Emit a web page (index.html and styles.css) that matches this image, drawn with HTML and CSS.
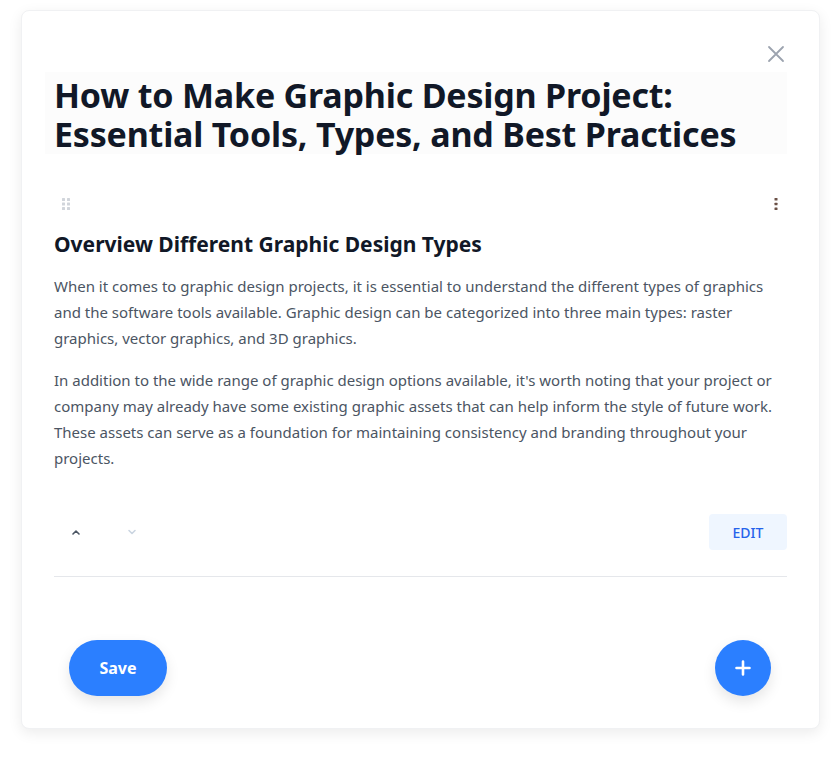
FILE: index.html
```html
<!DOCTYPE html>
<html lang="en">
<head>
  <meta charset="UTF-8">
  <meta name="viewport" content="width=device-width, initial-scale=1.0">
  <title>Graphic Design Project</title>
  <link rel="stylesheet" href="styles.css">
</head>
<body>
  <!-- Editor card -->
  <div class="editor">
    <div class="editor-top">
      <button class="close-btn" aria-label="Close">
        <svg width="18" height="18" viewBox="0 0 18 18" fill="none" stroke="#9ca3af" stroke-width="1.8" stroke-linecap="round">
          <path d="M2 2 L16 16 M16 2 L2 16"/>
        </svg>
      </button>
    </div>

    <h1 class="doc-title">How to Make Graphic Design Project: Essential Tools, Types, and Best Practices</h1>

    <!-- Content block -->
    <section class="block">
      <div class="block-bar">
        <span class="drag-handle">
          <svg width="8" height="12" viewBox="0 0 8 12" fill="#d1d5db">
            <rect x="0" y="0" width="3" height="3" rx="0.5"/>
            <rect x="5" y="0" width="3" height="3" rx="0.5"/>
            <rect x="0" y="4.5" width="3" height="3" rx="0.5"/>
            <rect x="5" y="4.5" width="3" height="3" rx="0.5"/>
            <rect x="0" y="9" width="3" height="3" rx="0.5"/>
            <rect x="5" y="9" width="3" height="3" rx="0.5"/>
          </svg>
        </span>
        <span class="kebab">
          <svg width="4" height="12" viewBox="0 0 4 12" fill="#6b5147">
            <rect x="0.5" y="0" width="3" height="2.5" rx="0.5"/>
            <rect x="0.5" y="4.8" width="3" height="2.5" rx="0.5"/>
            <rect x="0.5" y="9.5" width="3" height="2.5" rx="0.5"/>
          </svg>
        </span>
      </div>

      <h2>Overview Different Graphic Design Types</h2>
      <p>When it comes to graphic design projects, it is essential to understand the different types of graphics and the software tools available. Graphic design can be categorized into three main types: raster graphics, vector graphics, and 3D graphics.</p>
      <p>In addition to the wide range of graphic design options available, it's worth noting that your project or company may already have some existing graphic assets that can help inform the style of future work. These assets can serve as a foundation for maintaining consistency and branding throughout your projects.</p>

      <div class="block-controls">
        <div class="move-btns">
          <button class="move-btn">
            <svg width="10" height="6" viewBox="0 0 10 6" fill="none" stroke="#4b5563" stroke-width="1.6" stroke-linecap="round" stroke-linejoin="round"><path d="M2 5 L5 2 L8 5"/></svg>
          </button>
          <button class="move-btn">
            <svg width="10" height="6" viewBox="0 0 10 6" fill="none" stroke="#cbd5e1" stroke-width="1.6" stroke-linecap="round" stroke-linejoin="round"><path d="M2 1.5 L5 4.5 L8 1.5"/></svg>
          </button>
        </div>
        <button class="edit-btn">EDIT</button>
      </div>
    </section>

    <!-- Footer actions -->
    <div class="editor-footer">
      <button class="save-btn">Save</button>
      <button class="add-btn" aria-label="Add block">
        <svg width="16" height="16" viewBox="0 0 16 16" fill="none" stroke="#fff" stroke-width="2.6" stroke-linecap="round"><path d="M8 1.5 V14.5 M1.5 8 H14.5"/></svg>
      </button>
    </div>
  </div>
</body>
</html>
```

FILE: styles.css
```css
/* Reset */
* {
  margin: 0;
  padding: 0;
  box-sizing: border-box;
}

body {
  font-family: 'Noto Sans', 'Open Sans', sans-serif;
  background-color: #ffffff;
  color: #111827;
  padding: 10px 20px 30px 21px;
}

button {
  font-family: inherit;
  border: none;
  background: none;
  cursor: pointer;
}

/* Editor card */
.editor {
  width: 799px;
  height: 719px;
  background-color: #ffffff;
  border: 1px solid #f0f1f3;
  border-radius: 8px;
  box-shadow: 0 4px 14px rgba(0, 0, 0, 0.08);
  padding: 32px;
  display: flex;
  flex-direction: column;
}

.editor-top {
  display: flex;
  justify-content: flex-end;
  align-items: flex-start;
  height: 29px;
}

.close-btn {
  width: 30px;
  height: 30px;
  display: flex;
  align-items: center;
  justify-content: center;
  margin: -4px -4px 0 0;
}

.doc-title {
  margin-left: -9px;
  padding: 4px 9px 0 9px;
  background-color: #fcfcfc;
  font-size: 34px;
  line-height: 39px;
  font-weight: 700;
  color: #111827;
  letter-spacing: -0.2px;
}

/* Content block */
.block {
  margin-top: 42px;
}

.block-bar {
  display: flex;
  justify-content: space-between;
  align-items: center;
  height: 16px;
  padding: 0 9px 0 8px;
}

.drag-handle,
.kebab {
  display: flex;
}

.block h2 {
  margin-top: 17px;
  font-size: 21px;
  line-height: 30px;
  font-weight: 700;
  color: #111827;
}

.block p {
  margin-top: 14px;
  font-size: 15px;
  line-height: 26px;
  color: #4b5563;
}

.block p + p {
  margin-top: 16px;
}

.block-controls {
  display: flex;
  justify-content: space-between;
  align-items: center;
  margin-top: 43px;
  padding-bottom: 26px;
  border-bottom: 1px solid #e5e7eb;
}

.move-btns {
  display: flex;
  gap: 32px;
  padding-left: 10px;
}

.move-btn {
  width: 24px;
  height: 24px;
  display: flex;
  align-items: center;
  justify-content: center;
}

.edit-btn {
  width: 78px;
  height: 36px;
  background-color: #eff6ff;
  border-radius: 4px;
  color: #2563eb;
  font-size: 14px;
  font-weight: 500;
}

/* Footer actions */
.editor-footer {
  margin-top: auto;
  display: flex;
  justify-content: space-between;
  align-items: center;
  padding: 0 16px 0 15px;
}

.save-btn {
  width: 98px;
  height: 56px;
  border-radius: 28px;
  background-color: #2b7fff;
  color: #ffffff;
  font-size: 16px;
  font-weight: 700;
  box-shadow: 0 6px 14px rgba(0, 0, 0, 0.1);
}

.add-btn {
  width: 56px;
  height: 56px;
  border-radius: 50%;
  background-color: #2b7fff;
  display: flex;
  align-items: center;
  justify-content: center;
  box-shadow: 0 6px 14px rgba(0, 0, 0, 0.1);
}
```
